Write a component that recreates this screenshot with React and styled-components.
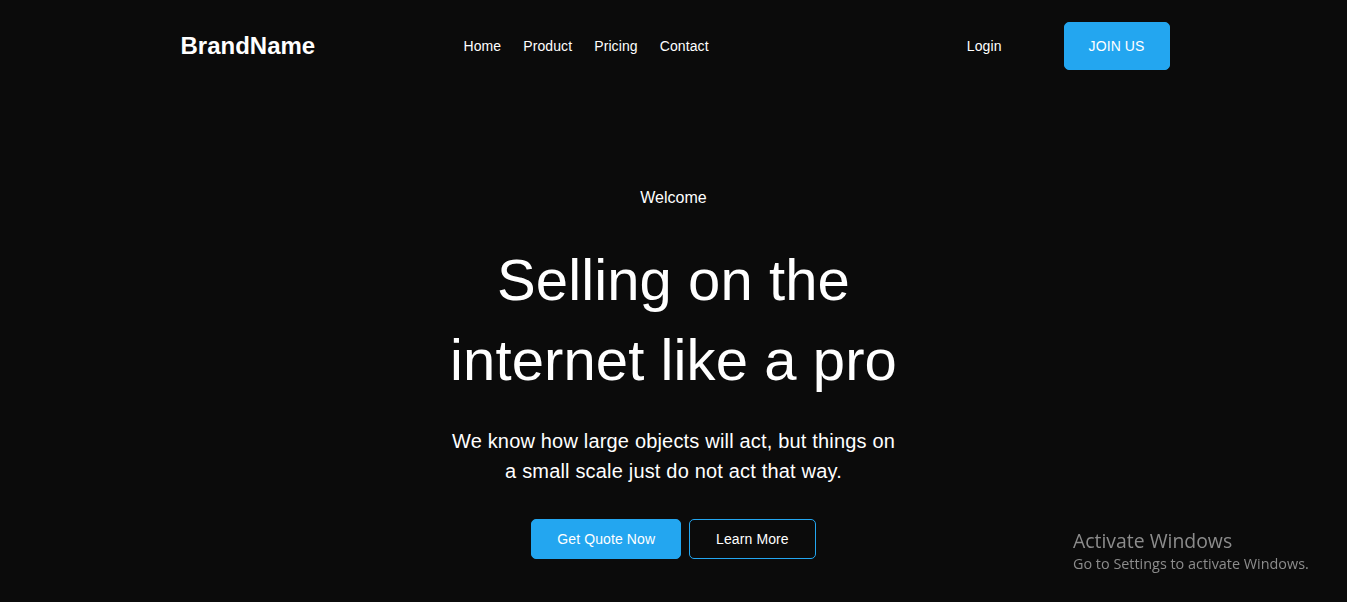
import styled, { createGlobalStyle } from 'styled-components';

const GlobalStyle = createGlobalStyle`
  * {
    box-sizing: border-box;
  }
  body {
    margin: 0;
    background: #0b0b0b;
    font-family: "Liberation Sans", Arial, sans-serif;
    color: #ffffff;
  }
`;

const Page = styled.div`
  min-height: 602px;
  background: #0b0b0b;
`;

const Nav = styled.nav`
  width: 992px;
  height: 92px;
  margin: 0 auto;
  display: flex;
  align-items: center;
  padding-left: 3px;
`;

const Logo = styled.h3`
  margin: 0;
  font-size: 24px;
  font-weight: 700;
  width: 283px;
`;

const Menu = styled.ul`
  margin: 0;
  padding: 0;
  list-style: none;
  display: flex;
  gap: 22px;
  flex: 1;
`;

const MenuItem = styled.li`
  font-size: 14px;
  line-height: 20px;
  letter-spacing: 0.1px;
  cursor: pointer;
`;

const Actions = styled.div`
  display: flex;
  align-items: center;
  gap: 62px;
`;

const LoginLink = styled.a`
  font-size: 14px;
  letter-spacing: 0.1px;
  color: #ffffff;
  cursor: pointer;
`;

const Button = styled.button`
  font-family: inherit;
  font-size: 14px;
  line-height: 16px;
  letter-spacing: 0.1px;
  color: #ffffff;
  border-radius: 5px;
  cursor: pointer;
  background: ${(p) => (p.$outline ? 'transparent' : '#23a6f0')};
  border: 1px solid #23a6f0;
  padding: ${(p) => p.$pad || '11px 25px'};
`;

const Hero = styled.section`
  width: 450px;
  margin: 0 auto;
  padding-top: 94px;
  display: flex;
  flex-direction: column;
  align-items: center;
  text-align: center;
`;

const Kicker = styled.h5`
  margin: 0;
  font-size: 16px;
  font-weight: 400;
  line-height: 24px;
`;

const Title = styled.h1`
  margin: 30px 0 0;
  font-size: 58px;
  font-weight: 400;
  line-height: 80px;
  letter-spacing: 0.1px;
`;

const Lead = styled.p`
  margin: 26px 0 0;
  font-size: 20px;
  line-height: 30px;
  letter-spacing: 0.18px;
`;

const ButtonRow = styled.div`
  display: flex;
  gap: 8px;
  margin-top: 33px;
`;

const Watermark = styled.div`
  position: fixed;
  left: 1073px;
  top: 528px;
  font-family: "Open Sans", "Noto Sans", sans-serif;
  color: #8c8c8c;
  pointer-events: none;
`;

const WatermarkTitle = styled.div`
  font-size: 19.4px;
  line-height: 26px;
`;

const WatermarkText = styled.div`
  font-size: 14.4px;
  line-height: 20px;
`;

export default function App() {
  return (
    <Page>
      <GlobalStyle />
      <Nav>
        <Logo>BrandName</Logo>
        <Menu>
          <MenuItem>Home</MenuItem>
          <MenuItem>Product</MenuItem>
          <MenuItem>Pricing</MenuItem>
          <MenuItem>Contact</MenuItem>
        </Menu>
        <Actions>
          <LoginLink>Login</LoginLink>
          <Button $pad="15px 24px">JOIN US</Button>
        </Actions>
      </Nav>
      <Hero>
        <Kicker>Welcome</Kicker>
        <Title>Selling on the internet like a pro</Title>
        <Lead>
          We know how large objects will act, but things on a small scale just
          do not act that way.
        </Lead>
        <ButtonRow>
          <Button>Get Quote Now</Button>
          <Button $outline $pad="11px 26px">
            Learn More
          </Button>
        </ButtonRow>
      </Hero>
      <Watermark>
        <WatermarkTitle>Activate Windows</WatermarkTitle>
        <WatermarkText>Go to Settings to activate Windows.</WatermarkText>
      </Watermark>
    </Page>
  );
}
